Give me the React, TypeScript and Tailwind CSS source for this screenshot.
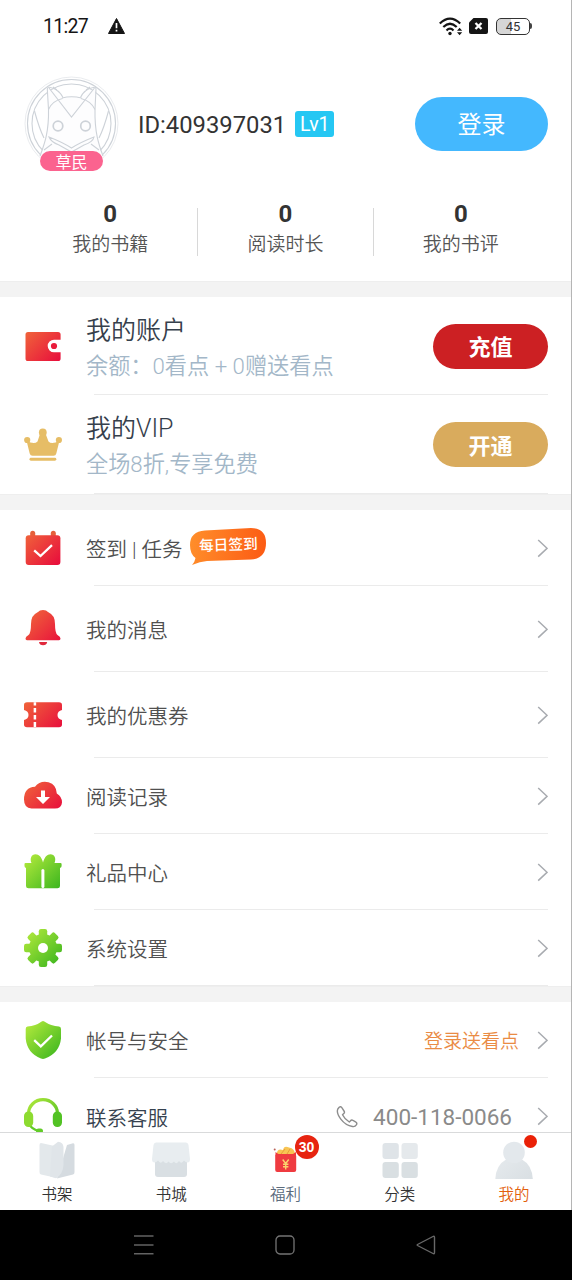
import React from 'react';

// Shared gradients, referenced by id from the icons below
const Gradients = () => (
    <svg width="0" height="0" className="absolute">
        <defs>
            <linearGradient id="red" x1="0" y1="0" x2="38" y2="38" gradientUnits="userSpaceOnUse">
                <stop offset="0.05" stopColor="#f0673a" />
                <stop offset="0.9" stopColor="#e8103c" />
            </linearGradient>
            <linearGradient id="green" x1="0" y1="0" x2="38" y2="38" gradientUnits="userSpaceOnUse">
                <stop offset="0.05" stopColor="#b4ea3c" />
                <stop offset="0.9" stopColor="#41b820" />
            </linearGradient>
            <linearGradient id="orange" x1="0" y1="0" x2="76" y2="10" gradientUnits="userSpaceOnUse">
                <stop offset="0" stopColor="#ff8f2b" />
                <stop offset="1" stopColor="#fc5c14" />
            </linearGradient>
            <linearGradient id="gray" x1="0" y1="0" x2="38" y2="38" gradientUnits="userSpaceOnUse">
                <stop offset="0" stopColor="#e9edf0" />
                <stop offset="1" stopColor="#d9dfe3" />
            </linearGradient>
        </defs>
    </svg>
);

const Glyph = ({ children }: { children: React.ReactNode }) => (
    <svg width="38" height="38" viewBox="0 0 38 38" fill="none" className="shrink-0">
        {children}
    </svg>
);

const WalletIcon = () => (
    <Glyph>
        <path
            fill="url(#red)"
            d="M4 5H34Q36.600 5 36.600 7.600V12.700H30A6.300 6.300 0 0 0 30 25.300H36.600V31.400Q36.600 34 34 34H4Q1.500 34 1.500 31.400V7.600Q1.500 5 4 5Z"
        />
        <circle cx="30" cy="19" r="3.100" fill="#e91c3c" />
    </Glyph>
);

const CrownIcon = () => (
    <Glyph>
        <g fill="#e6bd66">
            <circle cx="3.200" cy="14" r="3.100" />
            <circle cx="18.800" cy="6.500" r="3.900" />
            <circle cx="34.900" cy="14" r="3.100" />
            <path d="M2.500 14.500Q10 19 13.500 15.500L16 8H21.700L24.500 15.500Q28 19 35.500 14.500L32.300 27.500Q31.800 29.800 29.500 29.800H8.500Q6.300 29.800 5.700 27.500Z" />
            <rect x="5.500" y="31.800" width="26.800" height="2.900" rx="1.400" />
        </g>
    </Glyph>
);

const CalendarIcon = () => (
    <Glyph>
        <rect x="6.200" y="1.700" width="5" height="9" rx="2.500" fill="#e5603a" />
        <rect x="26.800" y="1.700" width="5" height="9" rx="2.500" fill="#e5603a" />
        <rect x="1.700" y="6.200" width="34.700" height="29.800" rx="3" fill="url(#red)" />
        <path d="M10.200 21.300L16.500 27L28 16.200" stroke="#fff" strokeWidth="2.300" />
    </Glyph>
);

const BellIcon = () => (
    <Glyph>
        <path
            fill="url(#red)"
            d="M19 0Q22.500 0 24 2Q31 5 31 14Q31 23 33.500 25Q36.500 26.500 36.500 28.500Q36.500 30.200 35 30.200H3Q1.500 30.200 1.500 28.500Q1.500 26.500 4.500 25Q7 23 7 14Q7 5 14 2Q15.500 0 19 0Z"
        />
        <path d="M15 32H23.200Q22.500 35.200 19.100 35.200Q15.500 35.200 15 32Z" fill="#e0283c" />
    </Glyph>
);

const TicketIcon = () => (
    <Glyph>
        <path
            fill="url(#red)"
            d="M3 6.200H35Q38 6.200 38 9V14Q33.500 15 33.500 19Q33.500 23 38 24V28.500Q38 31.300 35 31.300H3Q0 31.300 0 28.500V24Q4.500 23 4.500 19Q4.500 15 0 14V9Q0 6.200 3 6.200Z"
        />
        <path d="M10.900 6.300V9.500M10.900 12V16.500M10.900 19V23.500M10.900 26V31" stroke="#fff" strokeWidth="2.500" />
    </Glyph>
);

const CloudIcon = () => (
    <Glyph>
        <path
            fill="url(#red)"
            d="M7.500 31.500Q0 31 0 22.500Q0 10.500 11 9.800Q16 3.300 24.500 5.200Q32.500 7.500 32.800 16.500Q38 19.500 38 25.500Q37.500 31.500 31 31.500Z"
        />
        <path d="M17 13.500H21V20H26L19 27L12 20H17Z" fill="#fff" />
    </Glyph>
);

const GiftIcon = () => (
    <Glyph>
        <path
            fill="url(#green)"
            d="M19 9.500C17.500 4 15 1.200 11.500 1.200C7.500 1.200 5.500 5.500 7.500 10H1.500Q0.500 10 0.500 11V13Q0.500 14.500 2 15V33Q2 35.300 4.500 35.300H33.500Q36 35.300 36 33V15Q37.600 14.500 37.600 13V11Q37.600 10 36.500 10H30.500C32.500 5.500 30.500 1.200 26.500 1.200C23 1.200 20.500 4 19 9.500Z"
        />
        <path d="M18.900 17.500V33.500" stroke="#fff" strokeWidth="3" strokeLinecap="round" />
    </Glyph>
);

const GearIcon = () => (
    <Glyph>
        <mask id="gear" maskUnits="userSpaceOnUse" x="0" y="0" width="38" height="38">
            {[0, 45, 90, 135].map(angle => (
                <rect key={angle} x="14.800" y="0" width="8.400" height="38" rx="2.200" fill="#fff" transform={`rotate(${angle} 19 19)`} />
            ))}
            <circle cx="19" cy="19" r="14" fill="#fff" />
            <circle cx="19" cy="19" r="5" fill="#000" />
        </mask>
        <rect width="38" height="38" fill="url(#green)" mask="url(#gear)" />
    </Glyph>
);

const ShieldIcon = () => (
    <Glyph>
        <path
            fill="url(#green)"
            d="M17.700 0.500Q19 -0.300 20.300 0.500Q27 5 35 5.600Q37 6 37 8V17.500Q35.500 32 21 37.600Q19 38.400 17 37.600Q3 32 1.700 17.500V8Q1.700 6 3.500 5.600Q11.500 5 17.700 0.500Z"
        />
        <path d="M10.200 19.200L16.800 25.300L28 14.500" stroke="#fff" strokeWidth="2.300" />
    </Glyph>
);

const HeadsetIcon = () => (
    <Glyph>
        <path d="M4.500 17V15.500A14.500 13.800 0 0 1 33.500 15.500V17" stroke="url(#green)" strokeWidth="3.200" />
        <path d="M5 26Q8 31.500 15 33" stroke="#62cc28" strokeWidth="2.400" />
        <rect x="0" y="13.500" width="9.200" height="15.500" rx="4.500" fill="#8ddb30" />
        <rect x="28.800" y="13.500" width="9.200" height="15.500" rx="4.500" fill="#52c224" />
        <rect x="12" y="30.500" width="7" height="5" rx="2.500" fill="#62cc28" />
    </Glyph>
);

const Chevron = () => (
    <svg width="11" height="19" viewBox="0 0 11 19" fill="none" className="shrink-0">
        <path d="M1.200 1L10 9.300L1.200 17.600" stroke="#a8abb0" strokeWidth="1.500" />
    </svg>
);

const Phone = () => (
    <svg width="22" height="22" viewBox="0 0 22 22" fill="none" stroke="#8d8d8d" strokeWidth="1.400" strokeLinejoin="round">
        <path d="M3.200 1.200L1.800 3C-0.300 8 7 19 16.500 20.500Q19 21 20.500 18.700Q21.500 17 19.500 15.800L17 14.400Q15.500 13.500 14.300 15L13.300 16Q8.500 13 6.500 8.800L7.800 7.500Q9 6.500 8 5L6 1.900Q4.700 0 3.200 1.200Z" />
    </svg>
);

const Avatar = () => (
    <svg width="95" height="95" viewBox="0 0 95 95" fill="none" stroke="#cdd2d8" strokeWidth="1.100" className="block">
        <circle cx="47.500" cy="47.500" r="46.500" stroke="#e6e9ec" strokeWidth="0.900" />
        <circle cx="47.500" cy="47.500" r="44" />
        <circle cx="47.500" cy="47.500" r="39.500" />
        <path
            fill="#fdfdfe"
            stroke="none"
            d="M14.500 85C20 70 25 57 24.500 33.500L23.500 12L39.500 22.500Q47 20.500 55.500 22.500L71.500 12L71 33.500C70.500 57 75 70 80 85"
        />
        <path d="M16 80C20 69 25 57 24.500 33.500L23.300 13Q23.500 10.500 26.500 11.500Q35 13.500 39 21.500M79 80C75 69 70.500 57 71 33.500L72 13Q72 10.500 69 11.500Q60 13.500 56.500 21.500" />
        <path d="M25 12L47.500 41L70.500 12M24.500 33.500Q28 25 38.500 22.500M71 33.500Q67 25 57 22.500M38 22Q47.500 19.500 57.500 22M33 14Q30 12 29 11M62 14Q65 12 66 11M10.500 35Q15 52 20 62M84.500 35Q80 52 75 62" />
        <path d="M25 61Q38 66 47.500 72Q57 66 70 61Q69 66 60 69L47.500 76L35 69Q27 66 25 61ZM20 74L28 68M75 74L67 68" />
        <circle cx="34" cy="50" r="4.800" strokeWidth="1.700" />
        <circle cx="61.500" cy="50" r="4.800" strokeWidth="1.700" />
    </svg>
);

const StatusBar = () => (
    <header className="flex h-[52px] shrink-0 items-center pr-[39px] pl-[43px] text-[#151515]">
        <span className="w-[65px] pt-[1px] text-[19.5px] tracking-[-0.7px]">11:27</span>
        <svg width="17" height="16" viewBox="0 0 17 16">
            <path d="M8.500 0.500L16.500 15.500H0.500Z" fill="#151515" stroke="#151515" strokeLinejoin="round" />
            <path d="M8.500 5V10.200M8.500 11.700V13.500" stroke="#fff" strokeWidth="1.700" />
        </svg>
        <div className="ml-auto flex items-center">
            <svg width="24" height="19" viewBox="0 0 24 19" fill="none" stroke="#151515" strokeWidth="2.200" className="mr-1.5">
                <path d="M0.800 6.500Q11 -3.300 21.200 6.500M4.300 10Q11 3.500 17.700 10M7.500 13.400Q11 9.800 14.500 13.400" />
                <circle cx="11" cy="16.500" r="1.700" fill="#151515" stroke="none" />
                <path d="M18 13.800L20.600 10.800L23.200 13.800ZM18 15.200L20.600 18.200L23.200 15.200Z" fill="#151515" stroke="none" />
            </svg>
            <svg width="19" height="16" viewBox="0 0 19 16" className="mr-2">
                <path d="M4.500 0H17Q19 0 19 2V14Q19 16 17 16H2Q0 16 0 14V4.500Z" fill="#151515" />
                <path d="M6.500 5L12.500 11M12.500 5L6.500 11" stroke="#fff" strokeWidth="2.300" />
            </svg>
            <div className="flex h-[17px] w-[34px] items-center justify-center rounded-[5px] border-[1.5px] border-[#333] bg-linear-to-r from-[#d6d6d6] from-45% to-white to-45% text-[13px] leading-none text-[#333]">
                45
            </div>
            <div className="h-[6px] w-[2px] rounded-r bg-[#444]" />
        </div>
    </header>
);

const STATS = ['我的书籍', '阅读时长', '我的书评'];

const Profile = () => (
    <section className="flex h-[229px] shrink-0 flex-col pt-6">
        <div className="flex h-24 items-center pr-[23px] pl-6">
            <div className="relative -mt-[2px] h-[95px] w-[95px] shrink-0">
                <Avatar />
                <span className="absolute top-[75px] left-4 flex h-[20px] w-[63px] items-center justify-center rounded-full bg-[#fb638f] pt-[4px] text-[16px] leading-none text-white">
                    草民
                </span>
            </div>
            <span className="ml-[19px] pt-[3px] text-[23.8px] text-[#333]">ID:409397031</span>
            <span className="ml-[9px] flex h-[26px] w-[39px] items-center justify-center rounded-[3px] bg-[#25c7f3] pt-[2px] text-[19.5px] text-white">
                Lv1
            </span>
            <button className="ml-auto h-[54px] w-[133px] rounded-full bg-[#44b8fe] pt-[2px] text-[24px] leading-none text-white">
                登录
            </button>
        </div>
        <div className="mt-9 flex px-[23px]">
            {STATS.map((label, idx) => (
                <div
                    key={label}
                    className={`flex h-[48px] flex-1 flex-col items-center ${idx < 2 ? 'border-r border-[#d8d8d8]' : ''}`}
                >
                    <span className="-mt-[5px] h-[22px] text-[24px] leading-[22px] font-bold text-[#333]">0</span>
                    <span className="mt-[8px] text-[19px] leading-[24px] font-[350] text-[#555]">{label}</span>
                </div>
            ))}
        </div>
    </section>
);

const Gap = () => <div className="h-4 shrink-0 border-t border-[#eeeeee] bg-[#f3f3f3]" />;

const Divider = () => <div className="absolute right-[23px] bottom-0 left-[94px] h-px bg-[#ebebeb]" />;

const Bubble = () => (
    <div className="relative -mt-[4px] ml-[7px] h-[37px] w-[76px]">
        <svg width="76" height="37" viewBox="0 0 76 37" className="block">
            <path
                fill="url(#orange)"
                d="M15 2.500L61 0Q76 0 76 15Q76 30.500 61 31.500L17 33Q10 33.500 2 37Q5 33.500 5.500 30Q0 26 0 17Q0 3.500 15 2.500Z"
            />
        </svg>
        <span className="absolute top-[7px] left-[9px] -rotate-2 text-[14.7px] leading-[20px] font-medium whitespace-nowrap text-white">
            每日签到
        </span>
    </div>
);

const ACCOUNT_ROWS = [
    { title: '我的账户', sub: '余额：0看点 + 0赠送看点', action: '充值', Icon: WalletIcon, rowClass: 'h-[98px]', btnClass: 'bg-[#cc2023]' },
    { title: '我的VIP', sub: '全场8折,专享免费', action: '开通', Icon: CrownIcon, rowClass: 'h-[99px]', btnClass: 'bg-[#d9ab5d]' }
];

const MENU_ROWS = [
    { label: '签到 | 任务', Icon: CalendarIcon, rowClass: 'h-[76px]' },
    { label: '我的消息', Icon: BellIcon, rowClass: 'h-[86px]' },
    { label: '我的优惠券', Icon: TicketIcon, rowClass: 'h-[86px]' },
    { label: '阅读记录', Icon: CloudIcon, rowClass: 'h-[76px]' },
    { label: '礼品中心', Icon: GiftIcon, rowClass: 'h-[76px]' },
    { label: '系统设置', Icon: GearIcon, rowClass: 'h-[76px]' }
];

const MenuRow: React.FC<{
    label: string;
    Icon: React.FC;
    rowClass: string;
    labelClass?: string;
    badge?: React.ReactNode;
    extra?: React.ReactNode;
}> = ({ label, Icon, rowClass, labelClass = 'text-[#505050]', badge, extra }) => (
    <div className={`relative flex shrink-0 items-center pr-[23px] pl-6 ${rowClass}`}>
        <Icon />
        <span className={`ml-6 pt-[4px] text-[20.5px] leading-[28px] font-[350] whitespace-pre ${labelClass}`}>{label}</span>
        {badge}
        <div className="ml-auto flex items-center">
            {extra}
            <Chevron />
        </div>
        <Divider />
    </div>
);

const BookIcon = () => (
    <Glyph>
        <path d="M3 2L19 5.500V37L3 33.500Q1.500 33 1.500 31V4Q1.500 2 3 2Z" fill="#e3e8eb" />
        <path d="M29 4L35 2.200Q36.500 2 36.500 4V31Q36.500 33 35 33.500L19 37.500Z" fill="#d5dbe0" />
        <path d="M14 5.500L20 0.800Q25 1 25.500 6V24Q25 33 18 37.200L12 35.500Z" fill="#e0e5e9" />
    </Glyph>
);

const StoreIcon = () => (
    <Glyph>
        <path d="M3 19H35V33Q35 36 32 36H6Q3 36 3 33Z" fill="#d9dfe3" />
        <path
            d="M4 1.500H34Q36 1.500 36.500 4L38 18Q38 21.500 35.500 21.500Q33.500 21.500 32 19.500Q29.500 23.500 27 20Q24.500 24 22 20.500Q19 24 16.500 20.500Q14 24 11 20Q8.500 23.500 6 19.500Q4.500 21.500 2.500 21.500Q0 21.500 0 18L1.500 4Q2 1.500 4 1.500Z"
            fill="#e8edf0"
        />
    </Glyph>
);

const BonusIcon = () => (
    <Glyph>
        <circle cx="1.700" cy="8.500" r="1" fill="#b96158" />
        <path d="M3.500 14Q4 7 10 9Q11 4 16 6.500Q22 7 22 14Z" fill="#f8c553" />
        <path d="M8 13L12 8M14 13L17 8" stroke="#e99b3a" />
        <rect x="2.200" y="13" width="21" height="18" rx="2" fill="#ef3b40" />
        <path d="M2.500 11Q12.500 19 23 11V15H2.500Z" fill="#ef3b40" />
        <path d="M9.700 18.500L12.700 22.500L15.700 18.500M12.700 22.500V28.500M10 23.300H15.400M10 25.800H15.400" stroke="#fbd36d" strokeWidth="1.400" />
    </Glyph>
);

const CategoryIcon = () => (
    <Glyph>
        <rect x="1.500" y="2" width="16.300" height="16" rx="3" fill="#dfe4e8" />
        <rect x="20.500" y="2" width="16.300" height="16" rx="3" fill="#e5e9ec" />
        <rect x="1.500" y="21" width="16.300" height="16" rx="3" fill="#d9dfe2" />
        <rect x="20.500" y="21" width="16.300" height="16" rx="3" fill="#d9dfe2" />
    </Glyph>
);

const MineIcon = () => (
    <Glyph>
        <path d="M0.300 38Q1 24 11 18.500H27Q37 24 37.800 38Z" fill="url(#gray)" />
        <circle cx="19" cy="11.500" r="10.800" fill="#e3e8ec" />
    </Glyph>
);

const TABS = [
    { label: '书架', Icon: BookIcon, textClass: 'text-[#333]' },
    { label: '书城', Icon: StoreIcon, textClass: 'text-[#333]' },
    { label: '福利', Icon: BonusIcon, textClass: 'text-[#5b6b7c]', badge: '30' },
    { label: '分类', Icon: CategoryIcon, textClass: 'text-[#333]' },
    { label: '我的', Icon: MineIcon, textClass: 'text-[#e3600c]', dot: true }
];

const TabBar = () => (
    <nav className="flex h-[78px] shrink-0 border-t border-[#d9dadb] bg-white">
        {TABS.map(({ label, Icon, textClass, badge, dot }) => (
            <div key={label} className="flex flex-1 flex-col items-center pt-[8px]">
                <div className={`relative h-[38px] ${badge ? 'w-[26px]' : 'w-[38px]'}`}>
                    <Icon />
                    {badge && (
                        <span className="absolute -top-[6px] left-[22px] flex h-6 w-6 items-center justify-center rounded-full bg-[#e72410] font-['Liberation_Sans',sans-serif] text-[14px] font-bold text-white">
                            {badge}
                        </span>
                    )}
                    {dot && <span className="absolute -top-[6px] left-[29px] h-[13px] w-[13px] rounded-full bg-[#ea2107]" />}
                </div>
                <span className={`mt-[4px] text-[15.5px] leading-[24px] font-[350] ${textClass}`}>{label}</span>
            </div>
        ))}
    </nav>
);

const SystemNav = () => (
    <footer className="flex h-[70px] shrink-0 items-center justify-between bg-black pr-[136px] pl-[133px]">
        <svg width="21" height="22" viewBox="0 0 21 22" stroke="#636363" strokeWidth="1.400">
            <path d="M1 2H20.500M1 11H20.500M1 19.800H20.500" />
        </svg>
        <svg width="20" height="20" viewBox="0 0 20 20" fill="none" stroke="#747474" strokeWidth="1.300">
            <rect x="1" y="1" width="18" height="18" rx="4" />
        </svg>
        <svg width="20" height="20" viewBox="0 0 20 20" fill="none" stroke="#686868" strokeWidth="1.400" strokeLinejoin="round">
            <path d="M17 1.500Q18.500 0.700 18.500 2.500V17.500Q18.500 19.300 17 18.500L1.500 10.500Q0.800 10 1.500 9.500Z" />
        </svg>
    </footer>
);

export default function App() {
    return (
        <div className="flex h-[1280px] w-[572px] flex-col overflow-hidden bg-white font-['Roboto','Noto_Sans_CJK_SC',sans-serif]">
            <Gradients />
            <div className="flex h-[1210px] shrink-0 flex-col border-r border-[#b5b5b5]">
                <main className="flex min-h-0 flex-1 flex-col overflow-hidden">
                    <StatusBar />
                    <Profile />
                    <Gap />

                    {ACCOUNT_ROWS.map(({ title, sub, action, Icon, rowClass, btnClass }) => (
                        <div key={title} className={`relative flex shrink-0 items-center pr-[23px] pl-6 ${rowClass}`}>
                            <Icon />
                            <div className="ml-6 flex flex-col pt-[4px]">
                                <span className="text-[25px] leading-[36px] font-[350] text-[#36404c]">{title}</span>
                                <span className="text-[22.2px] leading-[35px] font-[350] whitespace-nowrap text-[#a3b7c8]">{sub}</span>
                            </div>
                            <button className={`ml-auto h-[45px] w-[115px] rounded-full pt-[4px] text-[22px] leading-none font-bold text-white ${btnClass}`}>
                                {action}
                            </button>
                            <Divider />
                        </div>
                    ))}
                    <Gap />

                    {MENU_ROWS.map((row, idx) => (
                        <MenuRow key={row.label} {...row} badge={idx === 0 && <Bubble />} />
                    ))}
                    <Gap />

                    <MenuRow
                        label="帐号与安全"
                        Icon={ShieldIcon}
                        rowClass="h-[76px]"
                        extra={<span className="mr-[18px] pt-[4px] text-[19px] font-[350] text-[#ea8b44]">登录送看点</span>}
                    />
                    <MenuRow
                        label="联系客服"
                        Icon={HeadsetIcon}
                        rowClass="h-[76px] pt-[1px]"
                        labelClass="text-[#36424f]"
                        extra={
                            <div className="mr-[25px] flex items-center gap-[15px]">
                                <Phone />
                                <span className="pt-[2px] text-[22.5px] text-[#8a8a8a]">400-118-0066</span>
                            </div>
                        }
                    />
                </main>
                <TabBar />
            </div>
            <SystemNav />
        </div>
    );
}
